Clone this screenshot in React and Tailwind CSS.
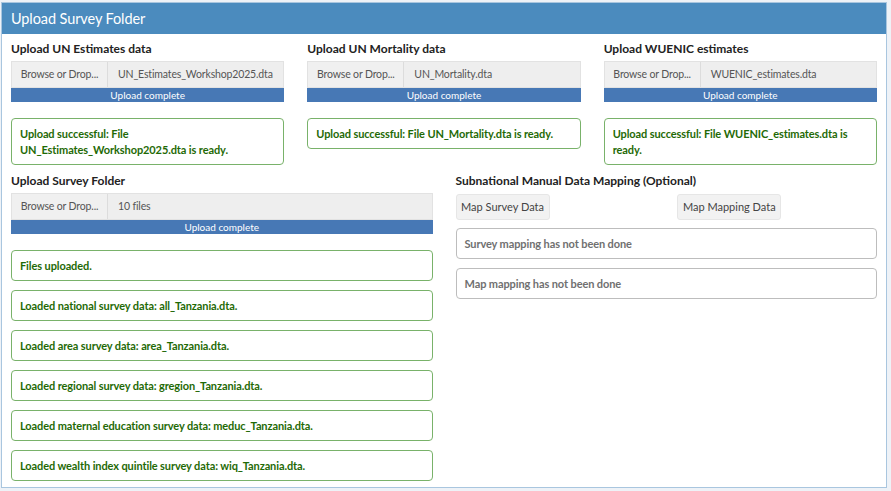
import React from 'react'

const font = { fontFamily: 'Lato, "Open Sans", sans-serif' }

function FileInput({ label, value }) {
  return (
    <div>
      <div className="text-[12px] font-bold text-[#222] leading-[16px] mb-[4px]">{label}</div>
      <div className="flex h-[27px] border border-[#e2e2e2] text-[10.5px] tracking-[-0.15px] text-[#555]">
        <div className="w-[96px] shrink-0 flex items-center justify-center bg-[#f0f0f0] border-r border-[#dcdcdc]">Browse or Drop...</div>
        <div className="flex-1 min-w-0 flex items-center px-[10px] bg-[#eeeeee] whitespace-nowrap overflow-hidden">{value}</div>
      </div>
      <div className="h-[14px] bg-[#4778b5] text-white text-[10px] leading-[14px] text-center">Upload complete</div>
    </div>
  )
}

function Msg({ children, gray }) {
  return (
    <div className={`rounded-[4px] border px-[8px] pt-[7px] pb-[6px] text-[11px] tracking-[-0.1px] font-bold leading-[16px] ${gray ? 'border-[#bdbdbd] text-[#707070]' : 'border-[#79b26a] text-[#1f6a06]'}`}>
      {children}
    </div>
  )
}

export default function App() {
  const loaded = [
    'Loaded national survey data: all_Tanzania.dta.',
    'Loaded area survey data: area_Tanzania.dta.',
    'Loaded regional survey data: gregion_Tanzania.dta.',
    'Loaded maternal education survey data: meduc_Tanzania.dta.',
    'Loaded wealth index quintile survey data: wiq_Tanzania.dta.',
  ]

  return (
    <div className="w-[891px] h-[491px] bg-[#eef2f7] pt-[2px] pl-[1px]" style={font}>
      <div className="w-[886px] h-[486px] bg-white border border-[#a9c6df]">
        <div className="h-[31px] bg-[#4b8bbe] text-white text-[14.5px] tracking-[-0.1px] flex items-center px-[9px]">Upload Survey Folder</div>

        <div className="px-[9px] pt-[7px]">
          <div className="grid grid-cols-3 gap-x-[23px]">
            <div>
              <FileInput label="Upload UN Estimates data" value="UN_Estimates_Workshop2025.dta" />
              <div className="mt-[16px]">
                <Msg>Upload successful: File UN_Estimates_Workshop2025.dta is ready.</Msg>
              </div>
            </div>
            <div>
              <FileInput label="Upload UN Mortality data" value="UN_Mortality.dta" />
              <div className="mt-[16px]">
                <Msg>Upload successful: File UN_Mortality.dta is ready.</Msg>
              </div>
            </div>
            <div>
              <FileInput label="Upload WUENIC estimates" value="WUENIC_estimates.dta" />
              <div className="mt-[16px]">
                <Msg>Upload successful: File WUENIC_estimates.dta is ready.</Msg>
              </div>
            </div>
          </div>

          <div className="grid grid-cols-2 gap-x-[23px] mt-[8px]">
            <div>
              <FileInput label="Upload Survey Folder" value="10 files" />
              <div className="mt-[16px] flex flex-col gap-[9px]">
                <Msg>Files uploaded.</Msg>
                {loaded.map((t) => (
                  <Msg key={t}>{t}</Msg>
                ))}
              </div>
            </div>
            <div>
              <div className="text-[12px] font-bold text-[#222] leading-[16px] mb-[4px]">Subnational Manual Data Mapping (Optional)</div>
              <div className="grid grid-cols-2 gap-x-[22px]">
                <div>
                  <button className="h-[26px] w-[94px] bg-[#f2f2f2] border border-[#e6e6e6] rounded-[3px] text-[11px] text-[#444]">Map Survey Data</button>
                </div>
                <div>
                  <button className="h-[26px] w-[104px] bg-[#f2f2f2] border border-[#e6e6e6] rounded-[3px] text-[11px] text-[#444]">Map Mapping Data</button>
                </div>
              </div>
              <div className="mt-[8px] flex flex-col gap-[9px]">
                <Msg gray>Survey mapping has not been done</Msg>
                <Msg gray>Map mapping has not been done</Msg>
              </div>
            </div>
          </div>
        </div>
      </div>
    </div>
  )
}
